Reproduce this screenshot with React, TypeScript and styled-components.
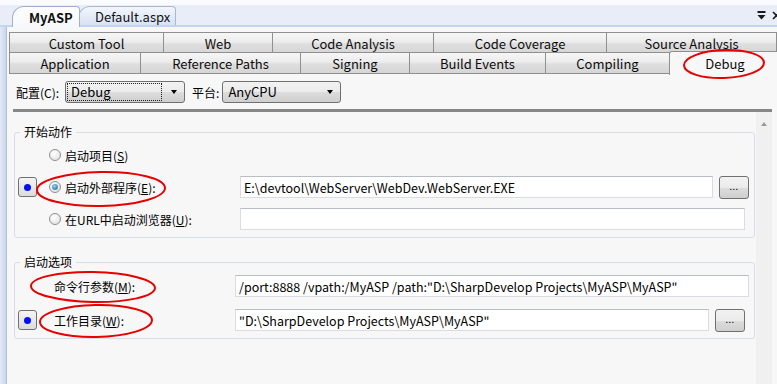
import styled, { createGlobalStyle } from "styled-components";

const GlobalStyle = createGlobalStyle`
  html, body { margin: 0; padding: 0; }
  body {
    background: #f7f7f7;
    font-family: "Noto Sans CJK SC", "Noto Sans", sans-serif;
    font-size: 12px;
    color: #000;
  }
`;

const Screen = styled.div`
  position: relative;
  width: 777px;
  height: 384px;
  overflow: hidden;
  display: flex;
  flex-direction: column;
  background: #f7f7f7;
`;

const TopStrip = styled.div`
  height: 5px;
  background: #fafbfe;
  flex: none;
`;

const DocBar = styled.div`
  height: 20px;
  flex: none;
  display: flex;
  align-items: flex-end;
  padding-left: 12px;
  background: #e9edf8;
  border-bottom: 2px solid #c4d3ee;
`;

const DocTab = styled.div<{ active?: boolean; w: number }>`
  position: relative;
  z-index: ${p => (p.active ? 2 : 1)};
  width: ${p => p.w}px;
  box-sizing: border-box;
  margin-left: ${p => (p.active ? 0 : -2)}px;
  margin-bottom: ${p => (p.active ? -2 : 0)}px;
  height: ${p => (p.active ? 21 : 19)}px;
  padding-left: 16px;
  display: flex;
  align-items: center;
  border: 1px solid ${p => (p.active ? "#9fb1d3" : "#a9b8d3")};
  border-bottom: none;
  border-radius: 12px 4px 0 0;
  background: ${p =>
    p.active
      ? "linear-gradient(#fefefe, #f6f8fc)"
      : "linear-gradient(#f3f6fc, #d8e2f4)"};
  font-size: 13px;
  font-weight: ${p => (p.active ? 700 : 400)};
  color: #111;
  white-space: nowrap;
`;

const DocSpacer = styled.div`
  flex: 1;
`;

const DocIcons = styled.div`
  display: flex;
  align-items: center;
  gap: 6px;
  height: 20px;
  margin-right: -4px;
`;

const Body = styled.div`
  flex: 1;
  display: flex;
  min-height: 0;
`;

const LeftRail = styled.div`
  width: 6px;
  flex: none;
  background: linear-gradient(to right, #e3e9f6, #c9d6ee);
`;

const Panel = styled.div`
  flex: 1;
  min-width: 0;
  display: flex;
  flex-direction: column;
  border-left: 1px solid #b5bfcf;
  background: #f7f7f7;
  padding-top: 4px;
`;

const TabRows = styled.div`
  display: flex;
  flex-direction: column;
  padding-left: 2px;
`;

const TabRow = styled.div<{ second?: boolean }>`
  display: flex;
  align-items: flex-end;
  height: ${p => (p.second ? 21 : 23)}px;
  margin-top: ${p => (p.second ? -1 : 0)}px;
`;

const Tab = styled.div<{ w: number; active?: boolean }>`
  flex: none;
  width: ${p => p.w}px;
  height: ${p => (p.active ? 24 : 22)}px;
  box-sizing: border-box;
  margin-left: -1px;
  &:first-child { margin-left: 0; }
  position: relative;
  z-index: ${p => (p.active ? 1 : 0)};
  display: flex;
  align-items: center;
  justify-content: center;
  border: 1px solid #8f8f8f;
  border-bottom: ${p => (p.active ? "none" : "1px solid #8f8f8f")};
  border-radius: ${p => (p.active ? "3px 3px 0 0" : "0")};
  background: ${p =>
    p.active
      ? "#f7f7f7"
      : "linear-gradient(#f6f6f6 0%, #ececec 45%, #dedede 55%, #d6d6d6 100%)"};
  font-size: 13px;
  color: #0c0c0c;
  white-space: nowrap;
  margin-bottom: ${p => (p.active ? -1 : 0)}px;
`;

const ConfigRow = styled.div`
  display: flex;
  align-items: center;
  height: 22px;
  margin-top: 7px;
  padding-left: 9px;
  font-size: 12px;
`;

const Label = styled.span<{ gap?: number }>`
  margin-right: ${p => p.gap ?? 4}px;
  white-space: nowrap;
`;

const Combo = styled.div<{ w: number; gapAfter?: number }>`
  width: ${p => p.w}px;
  height: 22px;
  box-sizing: border-box;
  margin-right: ${p => p.gapAfter ?? 0}px;
  border: 1px solid #707070;
  border-radius: 3px;
  background: linear-gradient(#f2f2f2 0%, #ebebeb 50%, #dddddd 50%, #cfcfcf 100%);
  display: flex;
  align-items: center;
  padding: 0 7px 0 2px;
  font-size: 13px;
`;

const ComboText = styled.span<{ focused?: boolean }>`
  flex: 1;
  height: 16px;
  line-height: 16px;
  padding-left: 3px;
  outline: ${p => (p.focused ? "1px dotted #222" : "none")};
  margin-right: ${p => (p.focused ? 10 : 0)}px;
`;

const ComboArrow = styled.span`
  width: 0;
  height: 0;
  border-left: 3.5px solid transparent;
  border-right: 3.5px solid transparent;
  border-top: 4px solid #000;
`;

const ScrollPanel = styled.div`
  flex: 1;
  display: flex;
  margin: 6px 5px 0 6px;
  border-top: 3px solid #878787;
  min-height: 0;
`;

const ScrollContent = styled.div`
  flex: 1;
  min-width: 0;
  padding: 12px 1px 0 1px;
`;

const ScrollBar = styled.div`
  width: 16px;
  flex: none;
  background: #f0f0f0;
  display: flex;
  justify-content: center;
  padding-top: 10px;
  box-sizing: border-box;
`;

const ScrollArrow = styled.span`
  width: 0;
  height: 0;
  border-left: 3.5px solid transparent;
  border-right: 3.5px solid transparent;
  border-bottom: 4px solid #9a9a9a;
`;

const Group = styled.fieldset<{ cols: string; pad: string; rowGap: number }>`
  margin: 0 0 16px 0;
  min-width: 0;
  border: 1px solid #d5dfe5;
  border-radius: 3px;
  padding: ${p => p.pad};
  display: grid;
  grid-template-columns: ${p => p.cols};
  grid-auto-rows: 22px;
  row-gap: ${p => p.rowGap}px;
  align-items: center;
`;

const Legend = styled.legend`
  padding: 0 4px;
  margin-left: 2px;
  font-size: 12px;
  line-height: 16px;
`;

const DotButton = styled.div`
  grid-column: 1;
  width: 19px;
  height: 20px;
  box-sizing: border-box;
  border: 1px solid #707070;
  border-radius: 3px;
  background: linear-gradient(#f4f4f4, #dcdcdc);
  display: flex;
  align-items: center;
  justify-content: center;
  &::after {
    content: "";
    width: 7px;
    height: 7px;
    border-radius: 50%;
    background: #0010f0;
  }
`;

const OptionLabel = styled.label`
  grid-column: 2;
  display: flex;
  align-items: center;
  gap: 4px;
  white-space: nowrap;
`;

const Radio = styled.span<{ checked?: boolean }>`
  width: 12px;
  height: 12px;
  box-sizing: border-box;
  border-radius: 50%;
  border: 1px solid #8e8f8f;
  background: radial-gradient(circle at 40% 35%, #ffffff, #dcdcdc);
  display: flex;
  align-items: center;
  justify-content: center;
  &::after {
    content: "";
    display: ${p => (p.checked ? "block" : "none")};
    width: 6px;
    height: 6px;
    border-radius: 50%;
    background: radial-gradient(circle at 40% 35%, #8fd0f0, #1d5f8a);
  }
`;

const Key = styled.u`
  text-decoration: underline;
`;

const TextBox = styled.div<{ span?: boolean; mr?: number }>`
  grid-column: ${p => (p.span ? "3 / 5" : "3")};
  height: 22px;
  box-sizing: border-box;
  margin-right: ${p => p.mr ?? 0}px;
  border: 1px solid #d9dde3;
  border-top-color: #b9bdc5;
  background: #fff;
  padding-left: 3px;
  display: flex;
  align-items: center;
  font-size: 12.5px;
  white-space: nowrap;
  overflow: hidden;
`;

const BrowseButton = styled.div`
  grid-column: 4;
  justify-self: end;
  width: 30px;
  height: 23px;
  box-sizing: border-box;
  border: 1px solid #707070;
  border-radius: 3px;
  background: linear-gradient(#f2f2f2 0%, #ebebeb 50%, #dddddd 50%, #cfcfcf 100%);
  display: flex;
  align-items: center;
  justify-content: center;
  font-size: 9px;
  letter-spacing: 0.5px;
  padding-bottom: 2px;
`;

const Marks = styled.svg`
  position: absolute;
  left: 0;
  top: 0;
  z-index: 10;
  pointer-events: none;
`;

const tabs1 = [
  { t: "Custom Tool", w: 155 },
  { t: "Web", w: 110 },
  { t: "Code Analysis", w: 162 },
  { t: "Code Coverage", w: 174 },
  { t: "Source Analysis", w: 171 },
];

const tabs2 = [
  { t: "Application", w: 132 },
  { t: "Reference Paths", w: 161 },
  { t: "Signing", w: 110 },
  { t: "Build Events", w: 137 },
  { t: "Compiling", w: 125 },
  { t: "Debug", w: 112, active: true },
];

// hand-drawn red annotation rings
const circles = [
  { cx: 724, cy: 64, rx: 40, ry: 14, r: -2 },
  { cx: 101, cy: 189, rx: 64, ry: 17, r: -1 },
  { cx: 93, cy: 287, rx: 62, ry: 15, r: 1 },
  { cx: 96, cy: 321, rx: 56, ry: 16, r: -1 },
];

export default function App() {
  return (
    <Screen>
      <GlobalStyle />
      <TopStrip />
      <DocBar>
        <DocTab active w={68}>MyASP</DocTab>
        <DocTab w={98}>Default.aspx</DocTab>
        <DocSpacer />
        <DocIcons>
          <svg width="9" height="9" viewBox="0 0 9 9">
            <rect x="0.5" y="0" width="8" height="2" fill="#1a1a1a" />
            <path d="M0.5 4 H8.5 L4.5 8.5 Z" fill="#1a1a1a" />
          </svg>
          <svg width="9" height="9" viewBox="0 0 9 9">
            <path d="M1 1 L8 8 M8 1 L1 8" stroke="#1a1a1a" strokeWidth="1.6" />
          </svg>
        </DocIcons>
      </DocBar>
      <Body>
        <LeftRail />
        <Panel>
          <TabRows>
            <TabRow>
              {tabs1.map(t => (
                <Tab key={t.t} w={t.w}>{t.t}</Tab>
              ))}
            </TabRow>
            <TabRow second>
              {tabs2.map(t => (
                <Tab key={t.t} w={t.w} active={t.active}>{t.t}</Tab>
              ))}
            </TabRow>
          </TabRows>

          <ConfigRow>
            <Label gap={6}>配置(C):</Label>
            <Combo w={120} gapAfter={7}>
              <ComboText focused>Debug</ComboText>
              <ComboArrow />
            </Combo>
            <Label gap={3}>平台:</Label>
            <Combo w={119}>
              <ComboText>AnyCPU</ComboText>
              <ComboArrow />
            </Combo>
          </ConfigRow>

          <ScrollPanel>
            <ScrollContent>
              <Group cols="31px 191px 1fr 36px" pad="4px 5px 7px 3px" rowGap={10}>
                <Legend>开始动作</Legend>
                <OptionLabel>
                  <Radio />
                  <span>启动项目(<Key>S</Key>)</span>
                </OptionLabel>
                <DotButton />
                <OptionLabel>
                  <Radio checked />
                  <span>启动外部程序(<Key>E</Key>):</span>
                </OptionLabel>
                <TextBox>E:\devtool\WebServer\WebDev.WebServer.EXE</TextBox>
                <BrowseButton>...</BrowseButton>
                <OptionLabel>
                  <Radio />
                  <span>在URL中启动浏览器(<Key>U</Key>):</span>
                </OptionLabel>
                <TextBox span mr={4} />
              </Group>

              <Group cols="36px 181px 1fr 36px" pad="5px 9px 7px 3px" rowGap={12}>
                <Legend>启动选项</Legend>
                <OptionLabel>
                  <span>命令行参数(<Key>M</Key>):</span>
                </OptionLabel>
                <TextBox span mr={-4}>
                  /port:8888 /vpath:/MyASP /path:"D:\SharpDevelop Projects\MyASP\MyASP"
                </TextBox>
                <DotButton />
                <OptionLabel>
                  <span>工作目录(<Key>W</Key>):</span>
                </OptionLabel>
                <TextBox>"D:\SharpDevelop Projects\MyASP\MyASP"</TextBox>
                <BrowseButton>...</BrowseButton>
              </Group>
            </ScrollContent>
            <ScrollBar>
              <ScrollArrow />
            </ScrollBar>
          </ScrollPanel>
        </Panel>
      </Body>

      <Marks width="777" height="384" viewBox="0 0 777 384">
        {circles.map((c, i) => (
          <ellipse
            key={i}
            cx={c.cx}
            cy={c.cy}
            rx={c.rx}
            ry={c.ry}
            transform={`rotate(${c.r} ${c.cx} ${c.cy})`}
            fill="none"
            stroke="#e60000"
            strokeWidth="2"
          />
        ))}
      </Marks>
    </Screen>
  );
}
